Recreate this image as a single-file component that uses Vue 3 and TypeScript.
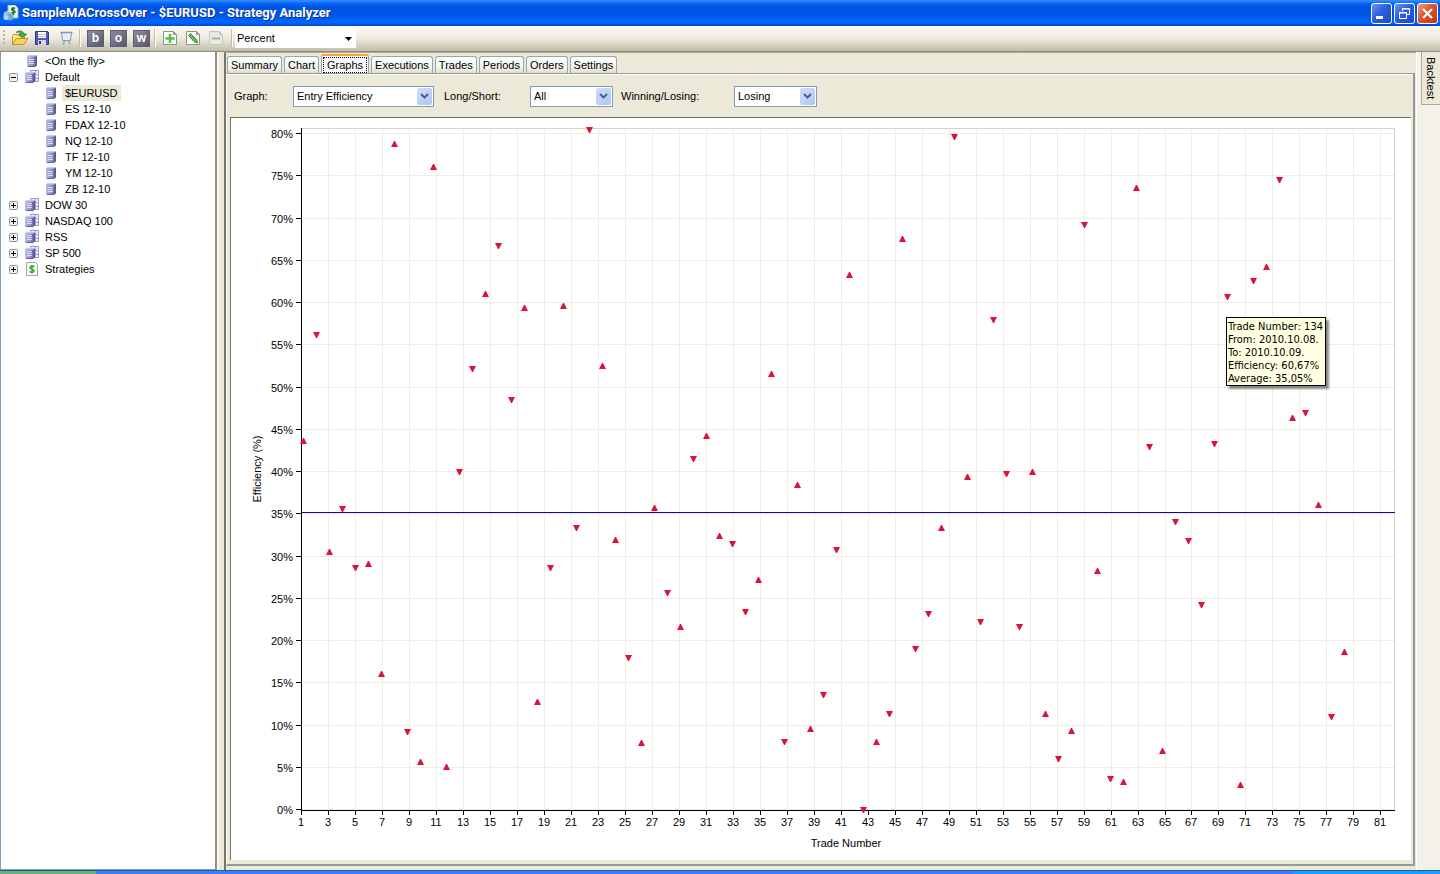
<script setup lang="ts">
import { computed, onBeforeUnmount, onMounted, ref } from 'vue'

type Direction = 'u' | 'd'

const graph = ref('Entry Efficiency')
const side = ref('All')
const outcome = ref('Losing')
const display = ref('Percent')
const activeTab = ref('Graphs')

const tabs = ['Summary', 'Chart', 'Graphs', 'Executions', 'Trades', 'Periods', 'Orders', 'Settings']

interface TreeRow { label: string; icon: 'item' | 'group' | 'script'; toggle?: 'open' | 'closed'; child?: boolean; selected?: boolean }
const tree: TreeRow[] = [
  { label: '<On the fly>', icon: 'item' },
  { label: 'Default', icon: 'group', toggle: 'open' },
  { label: '$EURUSD', icon: 'item', child: true, selected: true },
  { label: 'ES 12-10', icon: 'item', child: true },
  { label: 'FDAX 12-10', icon: 'item', child: true },
  { label: 'NQ 12-10', icon: 'item', child: true },
  { label: 'TF 12-10', icon: 'item', child: true },
  { label: 'YM 12-10', icon: 'item', child: true },
  { label: 'ZB 12-10', icon: 'item', child: true },
  { label: 'DOW 30', icon: 'group', toggle: 'closed' },
  { label: 'NASDAQ 100', icon: 'group', toggle: 'closed' },
  { label: 'RSS', icon: 'group', toggle: 'closed' },
  { label: 'SP 500', icon: 'group', toggle: 'closed' },
  { label: 'Strategies', icon: 'script', toggle: 'closed' },
]

// Trades in order: marker direction and depth below the top of a 682-unit scale.
const trades = (
  'u313 d206 u424 d380 d439 u436 u546 u16 d603 u634 u39 u639 d343 d240 u166 d117 d271 u180 u574 d439 ' +
  'u178 d399 d1 u238 u412 d529 u615 u380 d464 u499 d330 u308 u408 d415 d483 u452 u246 d613 u357 u601 ' +
  'd566 d421 u147 d681 u614 d585 u111 d520 d485 u400 d8 u349 d493 d191 d345 d498 u344 u586 d630 u603 ' +
  'd96 u443 d650 u654 u60 d318 u623 d393 d412 d476 d315 d168 u657 d152 u139 d51 u290 d284 u377 d588 u524'
).split(' ').map((t) => ({ dir: t[0] as Direction, depth: Number(t.slice(1)) }))

const pane = ref<HTMLElement | null>(null)
const width = ref(1180)
const height = ref(741)
let observer: ResizeObserver | undefined

function measure() {
  if (!pane.value) return
  width.value = pane.value.clientWidth
  height.value = pane.value.clientHeight
}
onMounted(() => {
  measure()
  observer = new ResizeObserver(measure)
  if (pane.value) observer.observe(pane.value)
})
onBeforeUnmount(() => observer?.disconnect())

const left = 70
const top = 10
const right = computed(() => width.value - 16)
const bottom = computed(() => height.value - 50)
const plotWidth = computed(() => right.value - left)
const plotHeight = computed(() => bottom.value - top)

const yTicks = computed(() =>
  Array.from({ length: 17 }, (_, i) => ({
    label: `${i * 5}%`,
    y: Math.round(bottom.value - 1 - (i * 42.25 * plotHeight.value) / 682),
  })),
)
const xTicks = computed(() =>
  Array.from({ length: 41 }, (_, i) => ({
    label: String(i * 2 + 1),
    x: Math.round(left + (i * 26.96 * plotWidth.value) / 1093),
  })),
)
const markers = computed(() =>
  trades.map((t, i) => {
    const x = Math.round(left + 2 + (i * 13 * plotWidth.value) / 1093)
    const y = Math.round(top + (t.depth * plotHeight.value) / 682)
    const path = t.dir === 'u' ? `M${x - 3} ${y + 3}h7l-3-6h-1z` : `M${x - 3} ${y - 2}h7l-3 6h-1z`
    return { x, y, path }
  }),
)
const averageY = computed(() => Math.round(top + (384 * plotHeight.value) / 682))
const tipStyle = computed(() => ({ left: `${markers.value[71].x - 1}px`, top: `${markers.value[71].y + 21}px` }))
</script>

<template>
  <div class="window">
    <svg class="defs" width="0" height="0" aria-hidden="true">
      <linearGradient id="cabinet"><stop offset="0" stop-color="#b9bbe6" /><stop offset=".55" stop-color="#9092cc" /><stop offset="1" stop-color="#504f88" /></linearGradient>
    </svg>
    <header class="titlebar">
      <svg class="app-icon" width="16" height="16" viewBox="0 0 16 16">
        <path d="M5 0h7l3 3v10H5z" fill="#f4faf4" stroke="#9ab89a" />
        <path d="M12 3.500c-1-1-3.500-.8-3.300.8s3.300 1 3.300 2.500-2.500 1.700-3.500.4M10.300 2v8" fill="none" stroke="#15851c" stroke-width="1.500" />
        <circle cx="4.500" cy="10" r="4" fill="#9cc5e3" /><circle cx="7" cy="12" r="3.500" fill="#70a8d4" /><circle cx="3" cy="12.500" r="2.500" fill="#bad9ed" />
      </svg>
      <h1>SampleMACrossOver - $EURUSD - Strategy Analyzer</h1>
      <div class="caption-buttons">
        <button type="button" aria-label="Minimize"><svg width="19" height="19" viewBox="0 0 19 19"><path d="M4 12h7v3H4z" fill="#fff" /></svg></button>
        <button type="button" aria-label="Restore"><svg width="19" height="19" viewBox="0 0 19 19"><path d="M7.500 7V4.500h7v6H12M7 5h8" fill="none" stroke="#fff" /><path d="M4.500 8.500h7v6h-7zM4 9h8" fill="none" stroke="#fff" /></svg></button>
        <button type="button" class="close" aria-label="Close"><svg width="19" height="19" viewBox="0 0 19 19"><path d="M5 5l9 9M14 5l-9 9" stroke="#fff" stroke-width="2.200" /></svg></button>
      </div>
    </header>

    <div class="toolbar" role="toolbar">
      <span class="grip"></span>
      <button type="button" class="tool tool-open" aria-label="Open"><svg width="18" height="18" viewBox="0 0 18 18"><path d="M1.500 15.500v-9l1-1h4l1 1.500h6v3" fill="#ffe98b" stroke="#c69225" /><path d="M1.500 15.500l3.500-6h12l-4 6z" fill="#f8cf58" stroke="#c69225" /><path d="M5 3.500C8 1 12 1.500 13 5h2.500l-4 4-4-4H10C9.500 3 7.500 2.600 5 3.500z" fill="#42b642" stroke="#167a20" stroke-width=".8" /></svg></button>
      <button type="button" class="tool" aria-label="Save"><svg width="16" height="16" viewBox="0 0 16 16"><path d="M1.500 1.500h12l1 1v12h-13z" fill="#5558b0" stroke="#343779" /><path d="M4 2h8v6H4z" fill="#fff" /><path d="M4 4.500h8M4 6.500h8" stroke="#c8cae8" /><path d="M4 10h8v5H4z" fill="#d5d7ed" /><path d="M5 11h2v3H5z" fill="#363979" /></svg></button>
      <button type="button" class="tool tool-board" aria-label="Display"><svg width="16" height="16" viewBox="0 0 16 16"><path d="M2.500 2.500h10l-1 8h-8z" fill="#e3ecf7" stroke="#8998b4" /><path d="M1.500 2.500h12" stroke="#8796b3" stroke-width="1.500" /><path d="M5.500 11l-1 2.500M9.500 11l1.500 3.500M3.500 14h2" fill="none" stroke="#7f8ba1" /></svg></button>
      <span class="separator"></span>
      <button type="button" class="tool letter">b</button>
      <button type="button" class="tool letter">o</button>
      <button type="button" class="tool letter">w</button>
      <span class="separator"></span>
      <button type="button" class="tool page" aria-label="Add"><svg width="16" height="16" viewBox="0 0 16 16"><path d="M1.500 1.500h10l3 3v10h-13z" fill="#fcfefb" stroke="#8a9689" /><path d="M11.500 1.500v3h3" fill="#9fa99e" stroke="#8a9689" /><path d="M8 4v9M3.500 8.500h9" stroke="#55bd46" stroke-width="2.500" /></svg></button>
      <button type="button" class="tool page" aria-label="Edit"><svg width="16" height="16" viewBox="0 0 16 16"><path d="M1.500 1.500h10l3 3v10h-13z" fill="#fcfefb" stroke="#8a9689" /><path d="M11.500 1.500v3h3" fill="#9fa99e" stroke="#8a9689" /><path d="M3.500 5.500l2-2 6 6 1 3.500-3.500-1.500z" fill="#66b956" stroke="#38853a" /></svg></button>
      <button type="button" class="tool page" aria-label="Remove" disabled><svg width="16" height="16" viewBox="0 0 16 16"><path d="M1.500 1.500h10l3 3v10h-13z" fill="#e9e9e4" stroke="#c5c5bd" /><path d="M11.500 1.500v3h3" fill="#c5c5bd" stroke="#c5c5bd" /><path d="M4 8.500h8" stroke="#aaaaa5" stroke-width="2" /></svg></button>
      <span class="separator last"></span>
      <div class="flat-combo">
        <select v-model="display" aria-label="Display unit"><option>Percent</option></select>
        <svg width="7" height="4" viewBox="0 0 7 4"><path d="M0 0h7L3.500 4z" /></svg>
      </div>
    </div>

    <div class="body">
      <nav class="tree" aria-label="Instruments">
        <ul>
          <li v-for="row in tree" :key="row.label" :class="{ child: row.child }">
            <button v-if="row.toggle" type="button" class="toggle" :aria-label="`Toggle ${row.label}`">
              <svg width="9" height="9" viewBox="0 0 9 9"><rect x=".5" y=".5" width="8" height="8" rx="1" fill="#f1efe8" stroke="#8593a4" /><path d="M2 4.500h5" stroke="#000" /><path v-if="row.toggle === 'closed'" d="M4.500 2v5" stroke="#000" /></svg>
            </button>
            <span v-else class="toggle"></span>
            <svg class="row-icon" width="16" height="16" viewBox="0 0 16 16">
              <template v-if="row.icon === 'item'">
                <path d="M3 3.500L5 2h7l1 1v9.500L11 14H4l-1-1z" fill="url(#cabinet)" /><path d="M4 3.500L5.500 2H12l.5 1-1.500.5z" fill="#c6c8ec" /><path d="M5 6.500h5M5 8.500h5M5 10.500h5" stroke="#d9daf4" /><path d="M4 13.500h7" stroke="#605f96" />
              </template>
              <template v-else-if="row.icon === 'group'">
                <path d="M6.500 1.500h8v11h-8z" fill="#eff1fb" stroke="#9497c6" /><path d="M11.500 1v12M7 5.500h8M7 9.500h8" stroke="#a0a3d2" />
                <path d="M1 4.500L3 3h7l1 1v8.500L9 14H2l-1-1z" fill="url(#cabinet)" /><path d="M2 4.500L3.500 3H10l.5 1-1.500.5z" fill="#c6c8ec" /><path d="M3 6.500h5M3 8.500h5M3 10.500h5" stroke="#d9daf4" /><path d="M2 13.500h7" stroke="#605f96" />
              </template>
              <template v-else>
                <path d="M2.500 1.500h9l2 2v11h-11z" fill="#fafcf8" stroke="#9bae99" /><path d="M10.500 6C9 4.500 6 4.900 6 6.700c0 2 4 1.200 4 3.200 0 1.600-3 1.900-4.500.6M8 4v8.500" fill="none" stroke="#37a536" stroke-width="1.500" />
              </template>
            </svg>
            <a href="#" :class="{ selected: row.selected }">{{ row.label }}</a>
          </li>
        </ul>
      </nav>
      <div class="splitter"></div>

      <main class="workspace">
        <div class="tabs" role="tablist">
          <button v-for="tab in tabs" :key="tab" type="button" role="tab" :aria-selected="tab === activeTab" :class="{ active: tab === activeTab }" @click="activeTab = tab"><span>{{ tab }}</span></button>
        </div>
        <section class="page-panel">
          <form class="filters" @submit.prevent>
            <label for="graph">Graph:</label>
            <div class="combo wide"><select id="graph" v-model="graph"><option>Entry Efficiency</option></select><i><svg width="9" height="7" viewBox="0 0 9 7"><path d="M1 1l3.500 3.500L8 1" /></svg></i></div>
            <label for="side">Long/Short:</label>
            <div class="combo"><select id="side" v-model="side"><option>All</option><option>Long</option><option>Short</option></select><i><svg width="9" height="7" viewBox="0 0 9 7"><path d="M1 1l3.500 3.500L8 1" /></svg></i></div>
            <label for="outcome" class="outcome-label">Winning/Losing:</label>
            <div class="combo"><select id="outcome" v-model="outcome"><option>All</option><option>Winning</option><option>Losing</option></select><i><svg width="9" height="7" viewBox="0 0 9 7"><path d="M1 1l3.500 3.500L8 1" /></svg></i></div>
          </form>
          <div ref="pane" class="chart">
            <svg class="plot" :width="width" :height="height" role="img" aria-label="Efficiency by trade number">
              <g class="grid" shape-rendering="crispEdges">
                <path v-for="t in yTicks" :key="t.label" :d="`M${left} ${t.y + 0.5}H${right}`" />
                <path v-for="t in xTicks" :key="t.label" :d="`M${t.x + 0.5} ${top}V${bottom}`" />
              </g>
              <path class="frame" :d="`M${left} ${top + 0.5}H${right - 0.5}V${bottom}`" />
              <path class="average" :d="`M${left} ${averageY + 0.5}H${right}`" />
              <path class="axis" :d="`M${left + 0.5} ${top}V${bottom + 0.5}H${right}`" />
              <g class="axis">
                <path v-for="t in yTicks" :key="t.label" :d="`M${left - 5} ${t.y + 0.5}h5`" />
                <path v-for="t in xTicks" :key="t.label" :d="`M${t.x + 0.5} ${bottom}v5`" />
              </g>
              <g class="labels">
                <text v-for="t in yTicks" :key="t.label" :x="left - 8" :y="t.y + 5" text-anchor="end">{{ t.label }}</text>
                <text v-for="t in xTicks" :key="t.label" :x="t.x" :y="bottom + 16" text-anchor="middle">{{ t.label }}</text>
                <text :x="left + plotWidth / 2 - 2" :y="bottom + 37" text-anchor="middle">Trade Number</text>
                <text :transform="`translate(30 ${top + plotHeight / 2}) rotate(-90)`" text-anchor="middle">Efficiency (%)</text>
              </g>
              <path v-for="(m, i) in markers" :key="i" class="marker" :d="m.path" />
            </svg>
            <div class="tip" :style="tipStyle">
              <div>Trade Number: 134</div><div>From: 2010.10.08.</div><div>To: 2010.10.09.</div><div>Efficiency: 60,67%</div><div>Average: 35,05%</div>
            </div>
          </div>
        </section>
      </main>

      <aside class="side-strip"><button type="button">Backtest</button></aside>
    </div>
    <footer class="taskbar"><span class="start"></span><span class="tasks"></span><span class="tray"></span></footer>
  </div>
</template>

<style>
html, body { margin: 0; height: 100%; overflow: hidden; }
</style>

<style scoped>
* { box-sizing: border-box; }
button, select { font: inherit; color: inherit; margin: 0; padding: 0; border: 0; background: none; }
.window { display: flex; flex-direction: column; height: 100vh; background: #ece9d8; color: #000; font: 11px/16px "Liberation Sans", Arial, sans-serif; }
svg { display: block; flex: none; }
.defs { position: absolute; }

.titlebar { display: flex; align-items: center; flex: none; height: 26px; padding: 0 2px 0 3px; background: linear-gradient(#3a90ff 0, #0a6cfa 3px, #0055e6 6px, #0054e3 14px, #0061fb 20px, #0066ff 23px, #0043c6 26px); }
.titlebar h1 { flex: 1; margin: 0 0 0 3px; color: #fff; font: bold 13px/26px Roboto, "Noto Sans", sans-serif; text-shadow: 1px 1px #0b2f86; white-space: nowrap; overflow: hidden; }
.caption-buttons { display: flex; gap: 2px; }
.caption-buttons button { display: grid; place-items: center; width: 21px; height: 21px; border: 1px solid #fff; border-radius: 3px; background: linear-gradient(135deg, #6d95ef, #2a5fdd 45%, #1b49c5); }
.caption-buttons .close { background: linear-gradient(135deg, #f0a183, #df5129 45%, #b93a16); }

.toolbar { display: flex; align-items: center; flex: none; height: 25px; padding: 0 0 1px 3px; background: linear-gradient(#fbfaf7, #eceade 50%, #c2beaa); }
.grip { width: 2px; height: 16px; margin-right: 4px; background: repeating-linear-gradient(#b9b6a4 0 2px, transparent 2px 4px); }
.tool { display: grid; place-items: center; width: 23px; height: 22px; }
.tool-open { width: 21px; }
.tool-board { margin-left: 2px; }
.letter { width: 17px; height: 17px; margin: 0 3px; border: 1px solid #5c5d72; background: linear-gradient(135deg, #8d8e9f, #55566e); color: #fff; font: bold 12px/13px "Liberation Sans", Arial, sans-serif; }
.separator { width: 1px; height: 18px; margin: 0 3px 0 1px; background: #c0bdab; box-shadow: 1px 0 #fff; }
.separator + .letter { margin-left: 4px; }
.separator.last { margin-left: 4px; }
.flat-combo { position: relative; width: 121px; height: 20px; background: #fff; }
.flat-combo select { width: 100%; height: 100%; padding-left: 2px; appearance: none; }
.flat-combo svg { position: absolute; right: 4px; top: 9px; pointer-events: none; }

.body { display: flex; flex: 1; min-height: 0; border-top: 1px solid #8d8b77; }
.tree { flex: none; width: 217px; border: 1px solid #7f9db9; border-width: 0 2px 1px 1px; border-right-color: #8f8f88; background: #fff; }
.tree ul { margin: 0; padding: 1px 0 0 8px; list-style: none; }
.tree li { display: flex; align-items: center; height: 16px; }
.toggle { width: 9px; height: 9px; margin-right: 6px; }
.child .toggle { margin-right: 25px; }
.row-icon { margin-right: 2px; }
.child .row-icon { margin-right: 3px; }
.tree a { padding: 0 3px; color: inherit; text-decoration: none; line-height: 16px; }
.tree .selected { background: #ece9d8; }
.splitter { width: 7px; flex: none; background: #ece9d8; border-left: 2px solid #f8f7f1; }

.workspace { display: flex; flex: 1; flex-direction: column; min-width: 0; padding: 1px 1px 4px 0; border-left: 2px solid #77756a; border-top: 1px solid #aca998; }
.tabs { display: flex; align-items: flex-end; flex: none; gap: 2px; height: 19px; padding-left: 1px; }
.tabs button { height: 17px; padding: 0 3px; border: 1px solid #91a7b4; border-bottom: 0; border-radius: 3px 3px 0 0; background: linear-gradient(#fff, #f3f2ea 70%, #dfdbca); line-height: 16px; }
.tabs .active { height: 19px; padding: 0 1px; border-top: 2px solid #f5a43b; background: #fcfcfe; line-height: 14px; }
.tabs .active span { display: block; padding: 0 3px; border: 1px dotted #000; }
.page-panel { display: flex; flex: 1; flex-direction: column; min-height: 0; padding: 1px 2px 4px 3px; border: 1px solid #919b9c; border-width: 1px 2px 2px 1px; border-left-color: #fff; box-shadow: inset 0 1px #fff; }
.filters { display: flex; align-items: center; flex: none; height: 42px; padding-left: 4px; }
.filters label { width: 59px; }
.combo { position: relative; width: 83px; height: 21px; margin-right: 8px; border: 1px solid #7f9db9; background: #fff; }
.combo.wide { width: 141px; margin-right: 10px; }
.combo.wide + label { width: 86px; }
.filters .outcome-label { width: 113px; }
.combo select { width: 100%; height: 100%; padding-left: 3px; appearance: none; }
.combo i { position: absolute; right: 1px; top: 1px; display: grid; place-items: center; width: 15px; height: 17px; border-radius: 2px; background: linear-gradient(135deg, #d0ddfd, #b0c5f6); pointer-events: none; }
.combo i path { fill: none; stroke: #4d6185; stroke-width: 2; }

.chart { position: relative; flex: 1; min-height: 0; border: 1px solid #716f64; border-width: 1px 0 0 1px; background: #fff; }
.plot { position: absolute; left: 0; top: 0; }
.grid path { stroke: #efede4; }
.frame { fill: none; stroke: #d3d3d3; }
.axis { fill: none; stroke: #000; }
.average { stroke: #0a0aaf; }
.marker { fill: #dc143c; }
.labels { font: 11px "Liberation Sans", Arial, sans-serif; }
.tip { position: absolute; padding: 2px 2px 0 1px; border: 1px solid #000; background: #ffffe1; box-shadow: 3px 3px 2px rgba(0, 0, 0, .45); font: 11px/13px "DejaVu Sans Condensed", "DejaVu Sans", sans-serif; white-space: nowrap; }

.side-strip { flex: none; width: 24px; padding-left: 4px; background: #f3f1ea; border-left: 1px solid #fff; }
.side-strip button { display: block; width: 19px; height: 53px; border: 1px solid #aca899; border-width: 0 0 1px 1px; background: #ece9d8; writing-mode: vertical-rl; line-height: 18px; }
.taskbar { display: flex; flex: none; height: 4px; border-top: 1px solid #2458b8; }
.start { width: 96px; background: #6bb36b; }
.tasks { flex: 1; background: #3a80ea; }
.tray { width: 147px; background: #1ca0f2; }
</style>
